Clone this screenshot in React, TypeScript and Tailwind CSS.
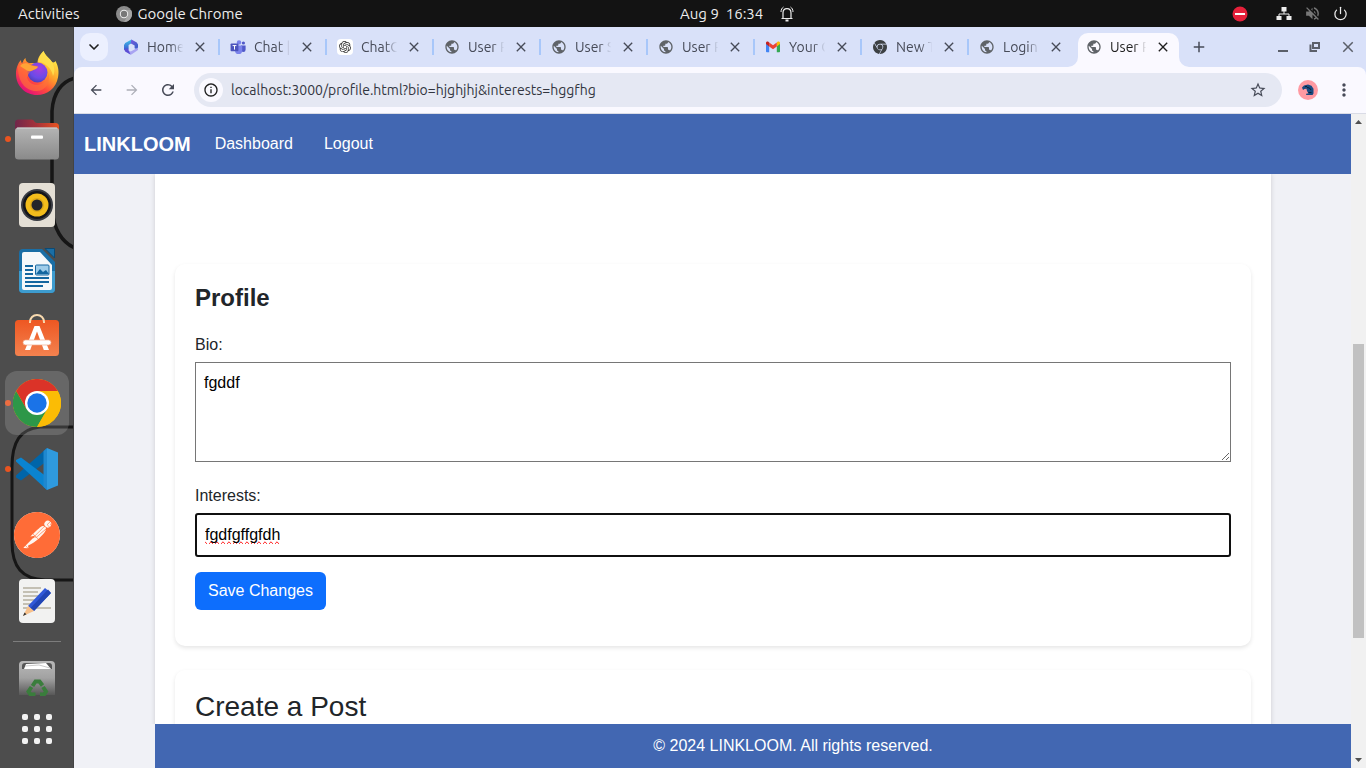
import React, { useState } from "react";
import { ChevronDown, Power } from "lucide-react";
import {
  MdArrowBack,
  MdArrowForward,
  MdClose,
  MdInfoOutline,
  MdMoreVert,
  MdPublic,
  MdRefresh,
  MdStarBorder,
  MdAdd,
  MdVolumeOff,
} from "react-icons/md";
import { SiGooglechrome, SiOpenai, SiPostman } from "react-icons/si";

/* ---------- favicons ---------- */

function Microsoft365Icon() {
  return (
    <svg viewBox="0 0 16 16" className="size-4">
      <defs>
        <linearGradient id="m365a" x1="0" y1="0" x2="0" y2="1">
          <stop offset="0" stopColor="#3fc3e8" />
          <stop offset="1" stopColor="#3a4fd0" />
        </linearGradient>
        <linearGradient id="m365b" x1="0" y1="0" x2="1" y2="1">
          <stop offset="0" stopColor="#7a5be0" />
          <stop offset="1" stopColor="#2f5fc4" />
        </linearGradient>
      </defs>
      <path d="M8.6 0.6 2.2 3.9 1 6v4.4l2.6 1.4 2-1.3V6l3.8-2.2z" fill="url(#m365a)" />
      <path d="M8.4 0.6 13.8 3.6 15 5.4v5.4l-3.4-1.6V6.4L7.6 4.2z" fill="url(#m365b)" />
      <path d="M15 8.6v2.3L8.4 15.4H7l-4.8-3 1.4-2 4.2 2z" fill="#a9a4f2" />
      <path d="M2.2 12.4 7.6 15.4 5.6 11.5 5 9.6 1 10z" fill="#5c4fd4" />
    </svg>
  );
}

function TeamsIcon() {
  return (
    <svg viewBox="0 0 16 16" className="size-4">
      <circle cx="9" cy="3.4" r="2.2" fill="#7b83eb" />
      <circle cx="13.4" cy="4" r="1.6" fill="#5059c9" />
      <path d="M11 6.4h4.6v4.4a2.3 2.3 0 0 1-4.6 0z" fill="#5059c9" />
      <path d="M5 6.4h7.2v5a3.6 3.6 0 0 1-7.2 0z" fill="#7b83eb" />
      <rect x="0.6" y="4.4" width="7.8" height="7.8" rx="0.8" fill="#4b53bc" />
      <path d="M2.6 6.6h3.8M4.5 6.6v4" stroke="#fff" strokeWidth="1" />
    </svg>
  );
}

function ChatGptIcon() {
  return (
    <span className="flex size-4 items-center justify-center rounded-sm bg-white">
      <SiOpenai className="size-3 text-[#333]" />
    </span>
  );
}

function GlobeIcon() {
  return <MdPublic className="size-4 text-[#5f6368]" />;
}

function GmailIcon() {
  return (
    <svg viewBox="0 0 16 16" className="size-4">
      <path d="M1 4.2v8.3c0 .5.4.8.8.8H4.2V6.6z" fill="#4285f4" />
      <path d="M11.8 13.3h2.4c.5 0 .8-.4.8-.8V4.2l-3.2 2.4z" fill="#34a853" />
      <path d="M11.8 3.6v3.8L15 5V3.9c0-1.3-1.4-1.9-2.4-1.1z" fill="#fbbc04" />
      <path d="M4.2 7.4V3.4L8 6.2l3.8-2.8v4L8 10.2z" fill="#ea4335" />
      <path d="M1 3.9V5l3.2 2.4V3.4l-.8-.6C2.4 2 1 2.6 1 3.9z" fill="#c5221f" />
    </svg>
  );
}

function ChromeMonoIcon() {
  return <SiGooglechrome className="size-[14px] text-[#3c4043]" />;
}

/* ---------- dock icons ---------- */

function FirefoxIcon() {
  return (
    <svg viewBox="0 0 48 48" className="size-12">
      <defs>
        <linearGradient id="ffBody" x1="0.85" y1="0.1" x2="0.25" y2="0.95">
          <stop offset="0" stopColor="#fff24a" />
          <stop offset="0.4" stopColor="#ffa02a" />
          <stop offset="0.7" stopColor="#ff4a3d" />
          <stop offset="1" stopColor="#e2107a" />
        </linearGradient>
        <radialGradient id="ffGlobe" cx="0.6" cy="0.3" r="0.8">
          <stop offset="0" stopColor="#a63ee0" />
          <stop offset="0.6" stopColor="#6a4be8" />
          <stop offset="1" stopColor="#4a3aa8" />
        </radialGradient>
      </defs>
      <path
        d="M30.500 2c1.500 4.500 6 7 8.500 11 1.800 1 2.800 0 3.500-1 3.200 6 3.500 11 2.500 16.500C43 39 34.500 46 24 46 12 46 3 36.500 3 25c0-6 2-11 5-14 0 2 .6 3 1.300 4C10 12 11 10 12.500 9c0 3 1.500 4 3 5h9c0-5 3-9 6-12z"
        fill="url(#ffBody)"
      />
      <circle cx="24.500" cy="23.500" r="10" fill="url(#ffGlobe)" />
      <path
        d="M5 17c2.500-4 6.500-5 11.500-3 2.500 2.500 5 2 8.500 3.500-1 3-5 3.500-7.500 5-2 1.500-2.500 4-3.500 6 1.500 5 6.500 8.500 12.500 7 6-1.300 9-6.500 8.500-12 3 9-1.500 18-11 18.500C13 42.500 4.500 33 5 17z"
        fill="#ff7139"
        fillOpacity="0.65"
      />
      <path d="M7 17c3-3.500 7-3 9.500-1.500 2.500 1.800 5 1.300 8.500 2.300-1 2.500-4 2.700-7 4.200C14 22.500 12 20 7 17z" fill="#ffa436" />
      <path d="M25 13c1-5 3-8 5.500-11 1.500 4.500 6 7 8.500 11 3 6 3 10 1 14-1-5-3-8-7-11-2.500-2-5-3-8-3z" fill="#ffe14d" fillOpacity="0.85" />
    </svg>
  );
}

function FilesIcon() {
  return (
    <svg viewBox="0 0 48 48" className="size-12">
      <defs>
        <linearGradient id="flBack" x1="0" y1="0" x2="1" y2="0">
          <stop offset="0" stopColor="#70264a" />
          <stop offset="0.5" stopColor="#a8323a" />
          <stop offset="1" stopColor="#e95420" />
        </linearGradient>
        <linearGradient id="flFront" x1="0" y1="0" x2="0" y2="1">
          <stop offset="0" stopColor="#b4b4b4" />
          <stop offset="1" stopColor="#8a8a8a" />
        </linearGradient>
      </defs>
      <path d="M2 8a3.500 3.500 0 0 1 3.500-3.500h13c2.500 0 3 3.500 5.500 3.500h18.500A3.500 3.500 0 0 1 46 11.500V22H2z" fill="url(#flBack)" />
      <rect x="2" y="12.500" width="44" height="32" rx="3.500" fill="url(#flFront)" />
      <path d="M4 13.100h40" stroke="#d2d2d2" strokeWidth="1" />
      <rect x="18" y="20.500" width="12" height="3.200" rx="1" fill="#fff" />
    </svg>
  );
}

function SpeakerIcon() {
  return (
    <svg viewBox="0 0 48 48" className="size-12">
      <rect x="6" y="2" width="36" height="44" rx="4" fill="#e4dfd5" />
      <circle cx="24" cy="24" r="16" fill="#383b42" />
      <circle cx="24" cy="24" r="14" fill="#15161a" />
      <circle cx="24" cy="24" r="11.500" fill="#f3bd1c" />
      <circle cx="24" cy="24" r="7" fill="#dca817" />
      <circle cx="24" cy="24" r="5.500" fill="#22242a" />
    </svg>
  );
}

function WriterIcon() {
  return (
    <svg viewBox="0 0 48 48" className="size-12">
      <path d="M10 2h19L42 15v27a4 4 0 0 1-4 4H10a4 4 0 0 1-4-4V6a4 4 0 0 1 4-4z" fill="#1a6ea5" />
      <path d="M6 24h36v18a4 4 0 0 1-4 4H10a4 4 0 0 1-4-4z" fill="#3d9ccf" />
      <path d="M32 1.500h9.500V11z" fill="#1a6ea5" stroke="#0b4a75" strokeWidth="1" />
      <path d="M11 5h16l12 13v23a2 2 0 0 1-2 2H11a2 2 0 0 1-2-2V7a2 2 0 0 1 2-2z" fill="#f5f8fa" />
      <path d="M12 19h8M12 23h8M12 27h8M12 31h24M12 35h24M12 39h18" stroke="#1467a0" strokeWidth="2" />
      <rect x="22.500" y="18" width="13.500" height="10" rx="1" fill="#9fcdea" stroke="#1467a0" />
      <path d="m23 27 4-5 3 3 3-2 3 4z" fill="#1467a0" />
    </svg>
  );
}

function SoftwareIcon() {
  return (
    <svg viewBox="0 0 48 48" className="size-12">
      <defs>
        <linearGradient id="swBag" x1="0" y1="0" x2="0" y2="1">
          <stop offset="0" stopColor="#ee5722" />
          <stop offset="1" stopColor="#f3824f" />
        </linearGradient>
      </defs>
      <rect x="2" y="7" width="44" height="36" rx="3.500" fill="url(#swBag)" />
      <path d="M17 10V9c0-4 3-7 7-7s7 3 7 7v1" fill="none" stroke="#f7d9ae" strokeWidth="2" />
      <path d="M21.500 13h5L36 37h-5.200L24 18.500 17.200 37H12z" fill="#fff" />
      <rect x="10" y="27" width="28" height="5" rx="2.500" fill="#fff" stroke="#f0a98a" strokeWidth="0.700" />
    </svg>
  );
}

function ChromeIcon() {
  return (
    <svg viewBox="0 0 48 48" className="size-12">
      <circle cx="24" cy="24" r="24" fill="#fbbc05" />
      <path d="M3.200 12A24 24 0 0 0 24 48L34.400 30 24 24 13.600 30z" fill="#2d9748" />
      <path d="M24 48 34.400 30 24 12h20.800A24 24 0 0 1 24 48z" fill="#fbbc05" />
      <path d="M3.200 12 13.600 30 24 24V12h20.800A24 24 0 0 0 3.200 12z" fill="#db3328" />
      <circle cx="24" cy="24" r="12" fill="#fff" />
      <circle cx="24" cy="24" r="9.700" fill="#1a73e8" />
    </svg>
  );
}

function VsCodeIcon() {
  return (
    <svg viewBox="0 0 48 48" className="size-12">
      <path d="M3 30.500 34 3v13L8 35.500 3 32.500z" fill="#0065a9" />
      <path d="M3 16.500 34 45V32L8 12.500 3 15z" fill="#0a84d0" />
      <path d="m34 3 11 4.500v33L34 45z" fill="#2f9ade" />
      <path d="M34 3v42l-3.500-3V6z" fill="#1f88cf" />
    </svg>
  );
}

function PostmanIcon() {
  return (
    <span className="flex size-[46px] rounded-full bg-[#fff5ee]">
      <SiPostman className="size-[46px] text-[#ff6c37]" />
    </span>
  );
}

function EditorIcon() {
  return (
    <svg viewBox="0 0 48 48" className="size-12">
      <rect x="6" y="2" width="36" height="44" rx="4" fill="#f2f2f1" />
      <path d="M10 11h18M10 15h15M10 19h18M10 23h12M10 27h10M10 31h28" stroke="#c4c0b4" strokeWidth="2" />
      <path d="m15 29 17-18 6 5-17 18z" fill="#3058d8" />
      <path d="m17.500 31 17.500-18.500 3 3.500-17 18z" fill="#2145b4" />
      <path d="m15 29 6 5-11 5z" fill="#f7c08a" />
      <path d="m11.500 35.500 2 1.800L10 39z" fill="#333" />
    </svg>
  );
}

function TrashIcon() {
  return (
    <svg viewBox="0 0 48 36" className="h-9 w-12">
      <defs>
        <linearGradient id="trBody" x1="0" y1="0" x2="0" y2="1">
          <stop offset="0" stopColor="#b8b8b8" />
          <stop offset="0.500" stopColor="#a2a2a2" />
          <stop offset="1" stopColor="#585858" />
        </linearGradient>
      </defs>
      <path d="M6 5a4 4 0 0 1 4-4h28a4 4 0 0 1 4 4v30H6z" fill="url(#trBody)" />
      <path d="M9 6a3 3 0 0 1 3-3h24a3 3 0 0 1 3 3v3H9z" fill="#555" />
      <path d="m11 9 2-5 20-1 5 6z" fill="#fff" />
      <path d="m12 6 14-1 11 3" stroke="#bbb" fill="none" strokeWidth="0.800" />
      <g fill="none" stroke="#3a7d3c" strokeWidth="4">
        <path d="m19.500 26 3-4.500h4l3 4" />
        <path d="m18.500 27-3 4.500 2 3h5" />
        <path d="m30 27 3 4.500-2 3h-4" />
      </g>
    </svg>
  );
}

type DockApp = { name: string; icon: React.ReactNode; running?: boolean; active?: boolean };

const dockApps: DockApp[] = [
  { name: "Firefox", icon: <FirefoxIcon /> },
  { name: "Files", icon: <FilesIcon />, running: true },
  { name: "Rhythmbox", icon: <SpeakerIcon /> },
  { name: "LibreOffice Writer", icon: <WriterIcon /> },
  { name: "Ubuntu Software", icon: <SoftwareIcon /> },
  { name: "Google Chrome", icon: <ChromeIcon />, running: true, active: true },
  { name: "Visual Studio Code", icon: <VsCodeIcon />, running: true },
  { name: "Postman", icon: <PostmanIcon /> },
  { name: "Text Editor", icon: <EditorIcon /> },
];

function Dock() {
  return (
    <aside className="relative flex w-[74px] shrink-0 flex-col items-center overflow-hidden border-r border-[#434343] bg-[#4d4d4d] pt-3.5">
      <svg viewBox="0 0 74 741" className="pointer-events-none absolute top-0 left-0 h-[741px] w-[74px]" fill="none" stroke="#161616">
        <path d="M75 51C62 54 53 66 52 84V180C53 203 63 216 75 221" strokeWidth="3.500" />
        <path d="M75 400H40C20 402 12 415 12 440V515C12 540 22 552 45 553H75" strokeWidth="3" />
      </svg>
      <ul className="relative flex w-full flex-col gap-0.5">
        {dockApps.map((app) => (
          <li key={app.name} className="flex items-center">
            <span className={app.running ? "ml-[5px] -mr-[11px] size-1.5 rounded-full bg-[#e95420]" : "ml-[5px] -mr-[11px] size-1.5"} />
            <button
              aria-label={app.name}
              className={
                app.active
                  ? "ml-[5px] flex size-16 items-center justify-center rounded-xl bg-white/15"
                  : "ml-[5px] flex size-16 items-center justify-center rounded-xl"
              }
            >
              {app.icon}
            </button>
          </li>
        ))}
      </ul>
      <hr className="relative mt-2 w-12 border-[#7d7d7d]" />
      <button aria-label="Trash" className="relative mt-[18px]">
        <TrashIcon />
      </button>
      <button aria-label="Show Applications" className="relative mt-[18px] grid grid-cols-3 gap-1.5">
        {Array.from({ length: 9 }, (_, i) => (
          <span key={i} className="size-1.5 rounded-[2px] bg-[#f2f2f2]" />
        ))}
      </button>
    </aside>
  );
}

/* ---------- desktop top bar ---------- */

function TopBar() {
  return (
    <header className="flex h-[27px] shrink-0 items-center bg-[#131313] text-[15px] leading-5 text-[#ededed]">
      <div className="flex w-[calc(50%-3px)] items-center pl-[18px]">
        <button>Activities</button>
        <button className="ml-9 flex items-center gap-1.5">
          <svg viewBox="0 0 16 16" className="size-4">
            <circle cx="8" cy="8" r="8" fill="#8b8b8b" />
            <path d="M8 4h7A8 8 0 0 1 8 16l3.500-6z" fill="#a5a5a5" />
            <circle cx="8" cy="8" r="4.200" fill="#eee" />
            <circle cx="8" cy="8" r="3.200" fill="#777" />
          </svg>
          Google Chrome
        </button>
      </div>
      <button className="flex items-center gap-4 whitespace-pre">
        Aug 9  16:34
        <svg viewBox="0 0 16 16" className="size-4" fill="none" stroke="#ededed" strokeWidth="1.200">
          <path d="M2.500 12.500h11M4 12.500V7c0-2.600 1.700-4.300 4-4.300S12 4.400 12 7v5.500" />
          <path d="M2 6C2 3.500 3 2 4.500 1M14 6c0-2.500-1-4-2.500-5" strokeWidth="1" />
          <path d="M6.500 14.500h3" strokeWidth="2" />
        </svg>
      </button>
      <div className="ml-auto flex items-center pr-[18px]">
        <svg viewBox="0 0 16 16" className="size-4">
          <circle cx="8" cy="8" r="7.500" fill="#e5203a" />
          <rect x="3" y="7" width="10" height="2" fill="#fff" />
        </svg>
        <svg viewBox="0 0 16 16" className="ml-7 size-4 fill-[#ededed]">
          <path d="M5.500 1h5v4.500h-5zM.5 10h5v4h-5zM10.500 10h5v4h-5z" />
          <path d="M8 5v3M3 10.500V8h10v2.500" fill="none" stroke="#ededed" />
        </svg>
        <MdVolumeOff className="ml-3 size-[17px] text-[#777]" />
        <Power className="ml-3 size-[15px]" strokeWidth={2} />
      </div>
    </header>
  );
}

/* ---------- browser chrome ---------- */

const tabs: { title: string; icon: React.ReactNode }[] = [
  { title: "Home", icon: <Microsoft365Icon /> },
  { title: "Chat |", icon: <TeamsIcon /> },
  { title: "ChatGPT", icon: <ChatGptIcon /> },
  { title: "User P", icon: <GlobeIcon /> },
  { title: "User S", icon: <GlobeIcon /> },
  { title: "User P", icon: <GlobeIcon /> },
  { title: "Your C", icon: <GmailIcon /> },
  { title: "New T", icon: <ChromeMonoIcon /> },
  { title: "Login", icon: <GlobeIcon /> },
  { title: "User P", icon: <GlobeIcon /> },
];

function TabStrip() {
  const last = tabs.length - 1;
  return (
    <div className="flex h-10 items-center bg-[#d9e1f9] pl-1.5">
      <button aria-label="Search tabs" className="mr-[7px] flex size-7 shrink-0 items-center justify-center rounded-[10px] bg-[#ecf0fe]">
        <ChevronDown className="size-4 text-[#1f1f1f]" strokeWidth={2.5} />
      </button>
      {tabs.map((tab, i) => {
        const active = i === last;
        return (
          <React.Fragment key={i}>
            <div
              className={
                active
                  ? "relative flex h-[34px] w-[101px] items-center self-end rounded-t-[10px] bg-[#faf9ff] px-2 pb-1.5 text-[#1f1f1f]"
                  : "flex h-[34px] w-[101px] items-center px-2 text-[#474b58]"
              }
            >
              {active && (
                <>
                  <svg viewBox="0 0 10 10" className="absolute bottom-0 -left-2.5 size-2.5 fill-[#faf9ff]">
                    <path d="M10 0v10H0A10 10 0 0 0 10 0z" />
                  </svg>
                  <svg viewBox="0 0 10 10" className="absolute -right-2.5 bottom-0 size-2.5 fill-[#faf9ff]">
                    <path d="M0 0v10h10A10 10 0 0 1 0 0z" />
                  </svg>
                </>
              )}
              <span className="flex size-4 shrink-0 items-center justify-center">{tab.icon}</span>
              <span className="mr-2 ml-2 w-[37px] overflow-hidden text-sm whitespace-nowrap [mask-image:linear-gradient(to_right,black_65%,transparent_98%)]">
                {tab.title}
              </span>
              <button aria-label="Close tab">
                <MdClose className="size-4" />
              </button>
            </div>
            <span className={i < last - 1 ? "mx-0.5 h-4 w-0.5 bg-[#a8c7fa]" : "mx-0.5 w-0.5"} />
          </React.Fragment>
        );
      })}
      <button aria-label="New tab" className="ml-[5px]">
        <MdAdd className="size-[18px] text-[#474b58]" />
      </button>
      <div className="ml-auto flex items-center gap-4 pr-[9px] text-[#5b5f69]">
        <button aria-label="Minimize">
          <svg viewBox="0 0 16 16" className="size-4">
            <path d="M3 12h10" stroke="currentColor" strokeWidth="2" />
          </svg>
        </button>
        <button aria-label="Restore">
          <svg viewBox="0 0 16 16" className="size-4" fill="none" stroke="currentColor" strokeWidth="2">
            <path d="M6 4h6v5H6zM3.500 5.500V12H10" />
          </svg>
        </button>
        <button aria-label="Close window">
          <MdClose className="size-[18px]" />
        </button>
      </div>
    </div>
  );
}

function Toolbar() {
  return (
    <div className="bg-[#d9e1f9]">
      <div className="flex h-[47px] items-center rounded-t-lg border-b border-[#dadce6] bg-[#faf9ff] pr-3 pl-3.5 text-[#474b58]">
        <button aria-label="Back">
          <MdArrowBack className="size-4" />
        </button>
        <button aria-label="Forward" className="ml-5">
          <MdArrowForward className="size-4 text-[#adafb8]" />
        </button>
        <button aria-label="Reload" className="ml-[19px]">
          <MdRefresh className="size-[18px]" />
        </button>
        <div className="mr-4 ml-[17px] flex h-[34px] flex-1 items-center rounded-full bg-[#e5e8f3] pr-[15px] pl-[5px]">
          <span className="flex size-6 items-center justify-center rounded-full bg-[#faf9ff]">
            <MdInfoOutline className="size-4 text-[#1f1f1f]" />
          </span>
          <input
            aria-label="Address"
            defaultValue="localhost:3000/profile.html?bio=hjghjhj&interests=hggfhg"
            className="ml-2 flex-1 bg-transparent text-sm text-[#33363f] outline-none"
          />
          <button aria-label="Bookmark this page">
            <MdStarBorder className="size-[18px]" />
          </button>
        </div>
        <button aria-label="User profile">
          <svg viewBox="0 0 20 20" className="size-5">
            <circle cx="10" cy="10" r="10" fill="#ff9aa2" />
            <path d="M4 7.500 6 5.500 10 4.500l3.500 1.200 2 3v4.800l-1 1.500H8l.5-1.500h2L9 11 8.500 8.800 6.500 9 5 10z" fill="#174a80" />
            <path d="M9 7.500 11.500 8l1.500 2M10.500 12.500h3M7 6.500h2" stroke="#0a2038" fill="none" />
          </svg>
        </button>
        <button aria-label="Menu" className="ml-4">
          <MdMoreVert className="size-5" />
        </button>
      </div>
    </div>
  );
}

/* ---------- page ---------- */

function ProfileForm() {
  const [bio, setBio] = useState("fgddf");
  const [interests, setInterests] = useState("fgdfgffgfdh");
  return (
    <section className="rounded-[10px] bg-white px-5 pt-5 pb-9 shadow-[0_2px_4px_rgba(0,0,0,0.1)]">
      <h2 className="mb-[21px] text-2xl leading-7 font-bold">Profile</h2>
      <form className="flex flex-col items-start" onSubmit={(e) => e.preventDefault()}>
        <label htmlFor="bio" className="mb-[5px]">
          Bio:
        </label>
        <textarea
          id="bio"
          value={bio}
          onChange={(e) => setBio(e.target.value)}
          className="mb-[22px] h-[100px] w-full resize-y border border-[#767676] bg-white p-2 text-black"
        />
        <label htmlFor="interests" className="mb-[5px]">
          Interests:
        </label>
        <input
          id="interests"
          type="text"
          value={interests}
          onChange={(e) => setInterests(e.target.value)}
          className="mb-[15px] h-11 w-full rounded-[3px] border-2 border-[#101010] bg-white px-2 text-black outline-none [text-decoration-line:spelling-error]"
        />
        <button type="submit" className="h-[38px] rounded-md bg-[#0d6efd] px-[13px] text-white">
          Save Changes
        </button>
      </form>
    </section>
  );
}

function Scrollbar() {
  return (
    <div aria-hidden="true" className="flex w-[15px] shrink-0 flex-col items-center bg-[#f1f1f1]">
      <svg viewBox="0 0 15 15" className="size-[15px] fill-[#505050]">
        <path d="M7.500 6 11 10H4z" />
      </svg>
      <span className="flex-[215]" />
      <span className="w-[11px] flex-[294] bg-[#c1c1c1]" />
      <span className="flex-[115]" />
      <svg viewBox="0 0 15 15" className="size-[15px] fill-[#505050]">
        <path d="M7.500 9 11 5H4z" />
      </svg>
    </div>
  );
}

function Page() {
  return (
    <div className="flex min-h-0 flex-1 font-['Liberation_Sans',Arial,sans-serif] text-base text-[#212529]">
      <div className="flex min-w-0 flex-1 flex-col bg-[#f0f1f6]">
        <nav className="flex h-[60px] shrink-0 items-center bg-[#4267b2] pl-2.5 text-white">
          <a href="#home" className="text-xl font-bold">
            LINKLOOM
          </a>
          <a href="#dashboard" className="ml-6">
            Dashboard
          </a>
          <a href="#logout" className="ml-[31px]">
            Logout
          </a>
        </nav>
        <main className="min-h-0 flex-1 overflow-hidden pr-20 pl-[81px]">
          <div className="flex flex-col gap-6 bg-white px-5 pt-[90px] shadow-[0_0_5px_rgba(0,0,0,0.15)]">
            <ProfileForm />
            <section className="rounded-[10px] bg-white p-5 shadow-[0_2px_4px_rgba(0,0,0,0.1)]">
              <h2 className="text-[28px] leading-[34px]">Create a Post</h2>
            </section>
          </div>
        </main>
        <footer className="ml-[81px] flex h-11 shrink-0 items-center justify-center bg-[#4267b2] pl-20 text-white">
          © 2024 LINKLOOM. All rights reserved.
        </footer>
      </div>
      <Scrollbar />
    </div>
  );
}

export default function App() {
  return (
    <div className="flex h-screen flex-col overflow-hidden font-['Ubuntu','Noto_Sans',sans-serif]">
      <TopBar />
      <div className="flex min-h-0 flex-1">
        <Dock />
        <div className="flex min-w-0 flex-1 flex-col">
          <TabStrip />
          <Toolbar />
          <Page />
        </div>
      </div>
    </div>
  );
}
